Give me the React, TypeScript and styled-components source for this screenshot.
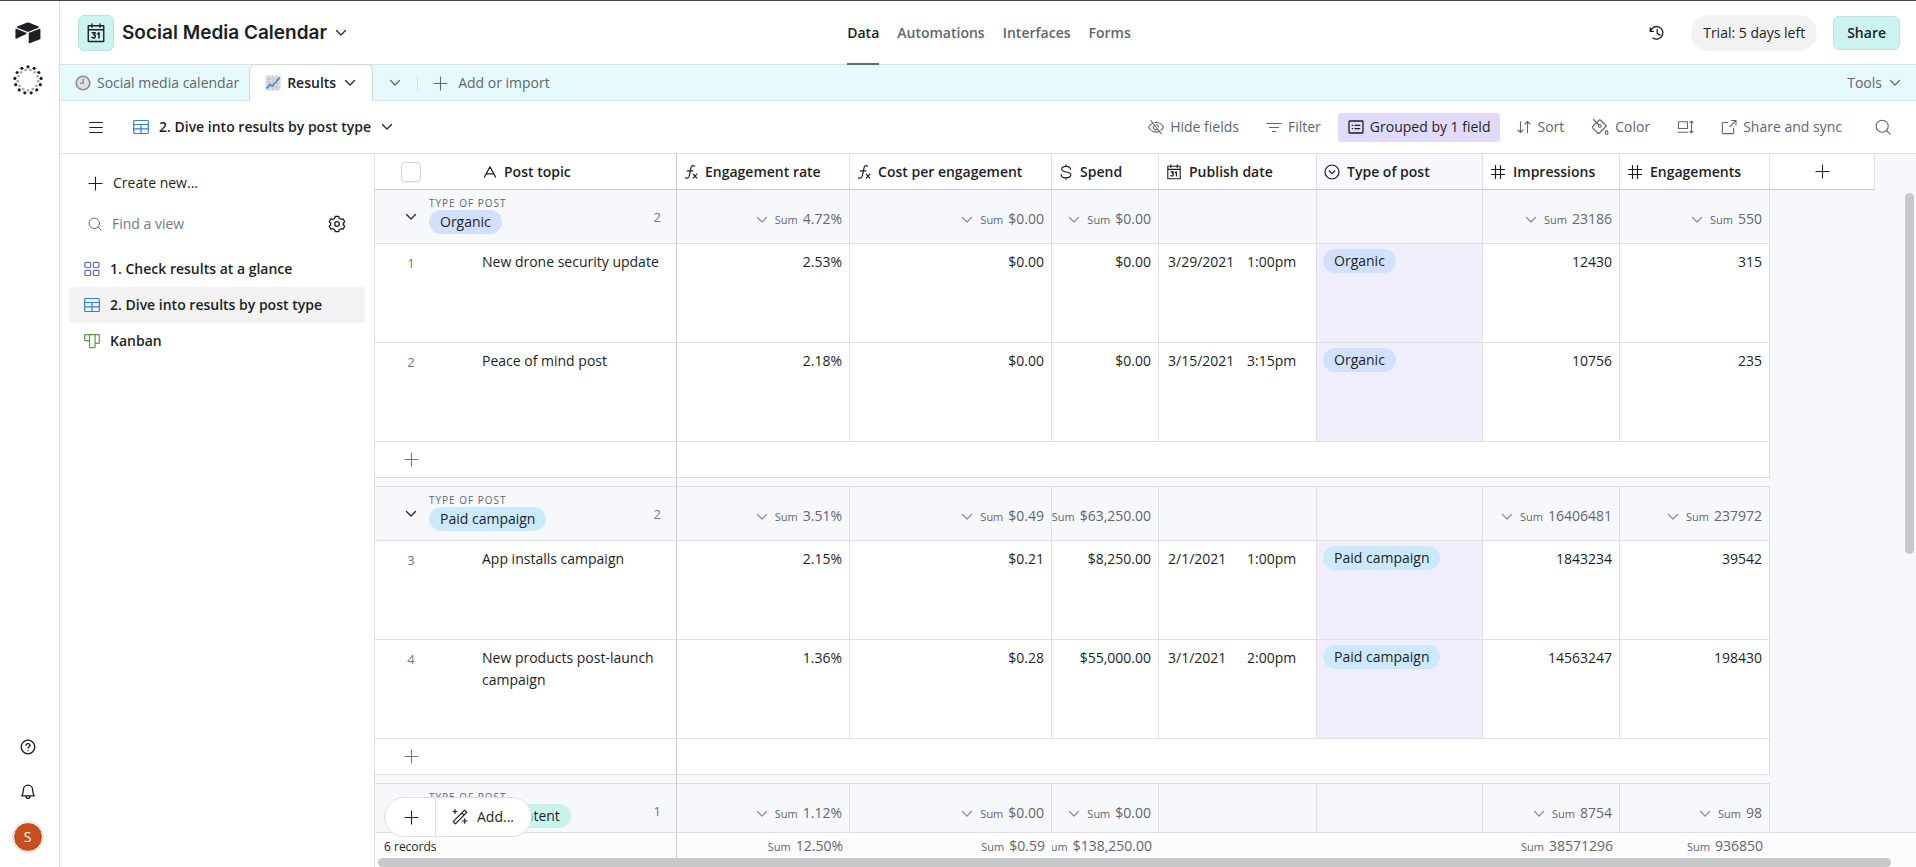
import React from 'react';
import styled, { createGlobalStyle, css } from 'styled-components';

const color = {
  text: '#1d1f25',
  muted: '#616670',
  faint: '#75797f',
  line: '#dddfe3',
  lineStrong: '#c7c9ce',
  canvas: '#f7f8fc',
  aqua: '#e6fafc',
  purple: '#e0dafb',
  purpleCell: '#f1eefc',
};

const GlobalStyle = createGlobalStyle`
  *, *::before, *::after { box-sizing: border-box; }
  body {
    margin: 0;
    background: #fff;
    color: ${color.text};
    font-family: 'Segoe UI', 'Open Sans', 'Noto Sans', sans-serif;
    font-size: 14px;
    line-height: 22px;
  }
  button, input { font: inherit; color: inherit; }
  button { margin: 0; padding: 0; border: 0; background: none; cursor: pointer; white-space: nowrap; }
  a { color: inherit; text-decoration: none; }
  svg { display: block; flex: none; }
`;

/* ---------- icons ---------- */

const Svg = styled.svg.attrs({ fill: 'none', stroke: 'currentColor', strokeLinecap: 'round', strokeLinejoin: 'round', 'aria-hidden': true })``;

type IconProps = { size?: number };

const Caret = () => (
  <Svg width="12" height="12" viewBox="0 0 12 12" strokeWidth="1.2"><path d="M1.500 3.500 6 8l4.500-4.500" /></Svg>
);
const Plus = ({ size = 15 }: IconProps) => (
  <Svg width={size} height={size} viewBox="0 0 15 15" strokeWidth="1.1"><path d="M7.500 1v13M1 7.500h13" /></Svg>
);
const Search = ({ size = 16 }: IconProps) => (
  <Svg width={size} height={size} viewBox="0 0 16 16" strokeWidth="1.1"><circle cx="7.2" cy="7.2" r="6" /><path d="m11.5 11.5 3.6 3.6" /></Svg>
);
const Calendar = ({ size = 16 }: IconProps) => (
  <Svg width={size} height={size} viewBox="0 0 16 16" strokeWidth="1.1">
    <path d="M1.800 2.200h12.400v12.600H1.800zM1.800 5.400h12.400M4.800.8v2.600M11.200.8v2.600" />
    <path strokeWidth="1.200" d="M5 7.800h2.400L6.200 9.400c1.800 0 1.600 2.600-.1 2.600-.6 0-1-.2-1.300-.6M9.200 8.600l1.200-.8V12" />
  </Svg>
);
const TableIcon = () => (
  <Svg width="16" height="16" viewBox="0 0 16 16" strokeWidth="1.2">
    <rect x=".7" y="1.500" width="14.600" height="13" rx="1" /><path d="M.7 5.500h14.600M.7 9.900h14.600M8 5.500v9" />
  </Svg>
);
const GalleryIcon = () => (
  <Svg width="16" height="16" viewBox="0 0 16 16" strokeWidth="1.2">
    <rect x=".9" y="1.300" width="5.600" height="5.200" rx="1" /><rect x="9.300" y="1.300" width="5.600" height="5.200" rx="1" />
    <rect x=".9" y="9.300" width="5.600" height="5.200" rx="1" /><rect x="9.300" y="9.300" width="5.600" height="5.200" rx="1" />
  </Svg>
);
const KanbanIcon = () => (
  <Svg width="16" height="16" viewBox="0 0 16 16" strokeWidth="1.2">
    <path d="M.7 1.600h14.600v7.800a.9.900 0 0 1-.9.900h-3.300v3.400a.9.900 0 0 1-.9.900H6.400a.9.900 0 0 1-.9-.9V7.600H1.600a.9.900 0 0 1-.9-.9zM5.500 1.600v6M11.100 1.600v8.700" />
  </Svg>
);
const Gear = () => (
  <Svg width="18" height="18" viewBox="0 0 18 18" strokeWidth="1.3">
    <circle cx="9" cy="9" r="2.3" />
    <path d="M7.300 1.300h3.400l.6 2 1.700 1 2.100-.5 1.600 2.900-1.400 1.500v1.600l1.400 1.500-1.600 2.900-2.100-.5-1.700 1-.6 2H7.300l-.6-2-1.700-1-2.100.5-1.600-2.900 1.400-1.500V8.200L1.300 6.700l1.600-2.900 2.100.5 1.700-1z" />
  </Svg>
);
const Menu = () => (
  <Svg width="14" height="14" viewBox="0 0 14 14" strokeWidth="1.2"><path d="M.7 2.500h12.600M.7 7.500h12.600M.7 12.500h12.600" /></Svg>
);
const EyeOff = () => (
  <Svg width="16" height="16" viewBox="0 0 16 16" strokeWidth="1.1">
    <path d="M2.900 1.500 13.200 14.600M5.300 4C2 5.300.6 8.200.6 8.200s2.200 4.900 7.400 4.900c1.100 0 2.100-.2 3-.6M7.200 3.400l.8-.1c5.200 0 7.400 4.900 7.400 4.900s-.8 1.700-2.400 3.100M6.300 6.300a2.600 2.600 0 0 0 3.500 3.900M8.600 5.600c1 .2 1.900 1.100 2 2.300" />
  </Svg>
);
const FilterIcon = () => (
  <Svg width="16" height="16" viewBox="0 0 16 16" strokeWidth="1.2"><path d="M.8 4.500h14.400M3.500 8.500h9M6.500 12.500h3" /></Svg>
);
const GroupIcon = () => (
  <Svg width="16" height="16" viewBox="0 0 16 16" strokeWidth="1.3">
    <rect x="1" y="2" width="14" height="12" rx=".8" /><path d="M4.300 6.400h.4M7 6.400h4.700M4.300 9.600h.4M7 9.600h4.700" />
  </Svg>
);
const SortIcon = () => (
  <Svg width="14" height="16" viewBox="0 0 14 16" strokeWidth="1.1"><path d="M3.500 2.500v11M1 11l2.500 2.500L6 11M10.500 13.500v-11M8 5l2.500-2.500L13 5" /></Svg>
);
const Bucket = () => (
  <Svg width="18" height="18" viewBox="0 0 18 18" strokeWidth="1.1">
    <path d="M2.500 1.500 8 7M1.600 8.700 8.300 2a.8.800 0 0 1 1.100 0l6 6-7 7a1.200 1.200 0 0 1-1.700 0L1.600 9.900a.9.900 0 0 1 0-1.200z" />
    <circle cx="8.800" cy="7.900" r="1.400" /><path d="M15.600 12.300s1.400 1.600 1.400 2.600a1.400 1.400 0 0 1-2.800 0c0-1 1.400-2.600 1.400-2.600z" />
  </Svg>
);
const RowHeight = () => (
  <Svg width="17" height="16" viewBox="0 0 17 16" strokeWidth="1.100">
    <path d="M1.500 2.800h9v6.700h-9zM1 13.200h10M14.500 2.200v11.600M13 3.700l1.500-1.500L16 3.700M13 12.300l1.500 1.500 1.500-1.500" />
  </Svg>
);
const ShareOut = () => (
  <Svg width="16" height="16" viewBox="0 0 16 16" strokeWidth="1.100">
    <path d="M10.500 1.500H15V6M9 7.500l5.800-5.800M6.500 3.500H2.200a.8.800 0 0 0-.8.800v9.500c0 .4.400.8.800.8h9.600c.4 0 .8-.4.800-.8V9" />
  </Svg>
);
const History = () => (
  <Svg width="16" height="16" viewBox="0 0 16 16" strokeWidth="1.300">
    <path d="M1.200 3v3.300h3.300M1.600 6A6.300 6.300 0 1 1 4 13M8.200 4.700v3.700l3 1.700" />
  </Svg>
);
const Help = () => (
  <Svg width="16" height="16" viewBox="0 0 16 16" strokeWidth="1.300">
    <circle cx="8" cy="8" r="6.800" /><path d="M6 6.300c.1-2.500 4.100-2.200 4 .1 0 1.300-2 1.400-2 2.700M8 11.400v.1" />
  </Svg>
);
const Bell = () => (
  <Svg width="16" height="18" viewBox="0 0 16 18" strokeWidth="1.300">
    <path d="M3.400 6.800a4.600 4.600 0 0 1 9.200 0c0 3.700.9 4.900 1.600 6.100H1.800c.7-1.200 1.600-2.400 1.600-6.100zM6 13.200c.1 3 3.900 3 4 0" />
  </Svg>
);
const Wand = () => (
  <Svg width="18" height="18" viewBox="0 0 18 18" strokeWidth="1.200">
    <path d="m2.200 13.600 11.400-11.400 2.200 2.200L4.400 15.800zM10.800 5l2.200 2.200M4 1.500v4M2 3.500h4M13.700 10.800v4.400M11.500 13h4.400" />
  </Svg>
);
const TextField = () => (
  <Svg width="14" height="14" viewBox="0 0 14 14" strokeWidth="1.300"><path d="M1.500 12 7 1.800 12.500 12M3.300 8.900h7.400" /></Svg>
);
const Formula = () => (
  <Svg width="14" height="16" viewBox="0 0 14 16" strokeWidth="1.200">
    <path d="M10.500 2C8.600 1 7.400 1.900 7 4L5.400 11.500c-.4 2.200-1.700 3-3.900 2.400M3.300 6.900h5.600M9.300 10.200l3.500 4M12.800 10.200l-3.500 4" />
  </Svg>
);
const Dollar = () => (
  <Svg width="14" height="16" viewBox="0 0 14 16" strokeWidth="1.200">
    <path d="M7 .8v1.400M7 13.800v1.400M11.500 5.200C11.300 3.200 9.500 2.300 7 2.300S2.700 3.300 2.700 5.200C2.700 9 11.900 7 11.900 10.800c0 2-2 3-4.900 3s-4.800-1.100-4.900-3.100" />
  </Svg>
);
const Hash = () => (
  <Svg width="16" height="16" viewBox="0 0 16 16" strokeWidth="1.200"><path d="M5.500 1.500v13M10.500 1.500v13M1.500 5.500h13M1.500 10.500h13" /></Svg>
);
const SelectIcon = () => (
  <Svg width="16" height="16" viewBox="0 0 16 16" strokeWidth="1.200"><circle cx="8" cy="8" r="7" /><path d="m5.300 7 2.700 2.700L10.700 7" /></Svg>
);
const Logo = () => (
  <svg width="26" height="22" viewBox="8 8 184 155" fill={color.text} aria-hidden="true">
    <path d="M90.039 12.368 24.079 39.66c-3.667 1.519-3.63 6.729.062 8.192l66.235 26.266a24.58 24.58 0 0 0 18.12 0l66.236-26.266c3.69-1.463 3.729-6.673.062-8.192l-65.96-27.292a24.58 24.58 0 0 0-18.795 0z" />
    <path d="M105.312 88.46v65.617c0 3.12 3.147 5.258 6.048 4.108l73.806-28.648a4.418 4.418 0 0 0 2.79-4.108V59.813c0-3.121-3.147-5.258-6.048-4.108l-73.806 28.648a4.42 4.42 0 0 0-2.79 4.108z" />
    <path d="m88.078 91.846-21.904 10.576-2.224 1.075-46.238 22.155c-2.930 1.414-6.672-.722-6.672-3.978V60.088c0-1.178.604-2.195 1.414-2.960a5.024 5.024 0 0 1 1.120-.840c1.104-.663 2.680-.840 4.020-.310L87.710 83.760c3.564 1.414 3.844 6.408.368 8.087z" />
  </svg>
);
const DotRing = () => {
  const steps = Array.from({ length: 13 }, (_, i) => (i / 13) * Math.PI * 2 - Math.PI / 2);
  return (
    <svg width="30" height="30" viewBox="0 0 30 30" aria-hidden="true">
      {steps.map((a) => (
        <circle key={a} cx={15 + 13.2 * Math.cos(a)} cy={15 + 13.2 * Math.sin(a)} r="1.600" fill={color.text} />
      ))}
      {steps.map((a) => (
        <circle key={a} cx={15 + 10.3 * Math.cos(a + 0.24)} cy={15 + 10.3 * Math.sin(a + 0.24)} r="1.400" fill="#a9abb2" />
      ))}
    </svg>
  );
};
const ClockEmoji = () => (
  <svg width="16" height="16" viewBox="0 0 16 16" fill="none" aria-hidden="true">
    <circle cx="8" cy="8" r="6.800" fill="#e3dfe1" stroke="#8e8d94" strokeWidth="1.600" />
    <path d="M8.200 3.800v4.400H5" stroke="#77757c" strokeWidth="1.100" />
  </svg>
);
const ChartEmoji = () => (
  <svg width="16" height="16" viewBox="0 0 16 16" fill="none" aria-hidden="true">
    <rect x=".5" y=".5" width="15" height="15" rx="1" fill="#dcdfe4" />
    <path d="M4 .5v15M8 .5v15M12 .5v15M.5 4h15M.5 8h15M.5 12h15" stroke="#c2c5cb" />
    <path d="M1.500 13.500 5 9.500l2.500 1.500L14.800 2.500" stroke="#3f88d6" strokeWidth="1.600" />
  </svg>
);

/* ---------- page frame ---------- */

const Page = styled.div`
  display: flex;
  height: 100vh;
  border-top: 1px solid #43434a;
  overflow: hidden;
`;
const Rail = styled.aside`
  display: flex;
  flex: none;
  flex-direction: column;
  align-items: center;
  width: 60px;
  padding: 20px 4px 15px 0;
  border-right: 1px solid ${color.line};
`;
const RailButton = styled.button<{ $push?: boolean }>`
  display: grid;
  place-items: center;
  height: 45px;
  width: 45px;
  margin-top: ${(p) => (p.$push ? 'auto' : 0)};
`;
const RailLogo = styled.a`
  height: 36px;
  padding-top: 1px;
`;
const Avatar = styled.button`
  width: 30px;
  height: 30px;
  margin-top: 8px;
  border: 1px solid #fff;
  border-radius: 50%;
  box-shadow: 0 0 0 1px #e2e2e2;
  background: #c84f20;
  color: #fff;
`;
const Main = styled.main`
  display: flex;
  flex: 1;
  flex-direction: column;
  min-width: 0;
`;

const Header = styled.header`
  display: grid;
  flex: none;
  grid-template-columns: 1fr auto 1fr;
  height: 64px;
  padding: 0 16px 0 18px;
  border-bottom: 1px solid ${color.line};
`;
const BaseTitle = styled.button`
  display: flex;
  align-items: center;
  justify-self: start;
  gap: 8px;
`;
const BaseIcon = styled.span`
  display: grid;
  place-items: center;
  width: 36px;
  height: 36px;
  border: 1px solid #b9dfe2;
  border-radius: 6px;
  background: #cdf3f1;
`;
const Title = styled.h1`
  margin: 0;
  font-family: 'Inter', sans-serif;
  font-size: 19px;
  font-weight: 600;
  line-height: 24px;
`;
const Nav = styled.nav`
  display: flex;
  gap: 18px;
`;
const NavLink = styled.a<{ $active?: boolean }>`
  display: flex;
  align-items: center;
  margin-bottom: -1px;
  border-top: 2px solid transparent;
  border-bottom: 2px solid ${(p) => (p.$active ? '#616670' : 'transparent')};
  color: ${(p) => (p.$active ? color.text : color.muted)};
  font-weight: 600;
`;
const HeaderActions = styled.div`
  display: flex;
  align-items: center;
  justify-content: flex-end;
  gap: 16px;
`;
const IconButton = styled.button`
  display: grid;
  place-items: center;
  width: 36px;
  height: 36px;
`;
const TrialPill = styled.button`
  height: 36px;
  padding: 0 12px;
  border-radius: 18px;
  background: #f2f2f2;
`;
const ShareButton = styled.button`
  height: 34px;
  padding: 0 13px;
  border: 1px solid #c3dfe0;
  border-radius: 6px;
  background: #cbf4f1;
  font-weight: 600;
`;

/* ---------- table tabs ---------- */

const TabBar = styled.div`
  display: flex;
  flex: none;
  height: 36px;
  background: ${color.aqua};
  color: ${color.muted};
  box-shadow: inset 0 -1px #cfe6e8;
`;
const Tab = styled.button<{ $active?: boolean }>`
  display: flex;
  align-items: center;
  gap: 6px;
  padding: 0 10px 0 15px;
  ${(p) =>
    p.$active &&
    css`
      margin-top: -1px;
      padding-right: 16px;
      border: 1px solid #cfd6da;
      border-bottom: 0;
      border-radius: 6px 6px 0 0;
      background: #fff;
      color: ${color.text};
      font-weight: 600;
    `}
  svg:last-child:not(:first-child) { margin-left: 2px; }
`;
const TabMenu = styled.button`
  display: grid;
  place-items: center;
  width: 44px;
`;
const TabDivider = styled.span`
  align-self: center;
  width: 1px;
  height: 14px;
  background: #cfe0e3;
`;
const TabAction = styled.button<{ $end?: boolean }>`
  display: flex;
  align-items: center;
  gap: 10px;
  padding: 0 15px;
  ${(p) => p.$end && css`margin-left: auto; gap: 7px;`}
`;

/* ---------- view toolbar ---------- */

const Toolbar = styled.div`
  display: flex;
  flex: none;
  align-items: center;
  height: 53px;
  padding: 0 15px 0 18px;
  border-bottom: 1px solid ${color.line};
`;
const ViewButton = styled.button`
  display: flex;
  align-items: center;
  gap: 10px;
  margin-left: 19px;
  font-weight: 600;
`;
const Tint = styled.span<{ $c: string }>`
  display: flex;
  color: ${(p) => p.$c};
`;
const Tools = styled.div`
  display: flex;
  align-items: center;
  gap: 7px;
  margin-left: auto;
`;
const ToolButton = styled.button<{ $on?: boolean }>`
  display: flex;
  align-items: center;
  gap: 6px;
  height: 29px;
  padding: 0 10px;
  border-radius: 3px;
  background: ${(p) => (p.$on ? color.purple : 'transparent')};
  color: ${(p) => (p.$on ? color.text : color.muted)};
  &:last-child { margin-left: 6px; }
`;

/* ---------- view sidebar ---------- */

const Workspace = styled.div`
  display: flex;
  flex: 1;
  min-height: 0;
`;
const Sidebar = styled.aside`
  flex: none;
  width: 315px;
  padding: 11px 9px;
  border-right: 1px solid ${color.line};
`;
const CreateButton = styled.button`
  display: flex;
  align-items: center;
  gap: 10px;
  height: 36px;
  padding-left: 19px;
`;
const SearchRow = styled.label`
  display: flex;
  align-items: center;
  gap: 10px;
  height: 36px;
  margin: 5px 10px 9px 19px;
  color: ${color.muted};
`;
const SearchInput = styled.input`
  flex: 1;
  min-width: 0;
  padding: 0;
  border: 0;
  outline: 0;
  background: none;
  &::placeholder { color: #75797f; opacity: 1; }
`;
const ViewList = styled.ul`
  margin: 0;
  padding: 0;
  list-style: none;
`;
const ViewLink = styled.a<{ $active?: boolean }>`
  display: flex;
  align-items: center;
  gap: 10px;
  height: 36px;
  padding-left: 15px;
  border-radius: 3px;
  background: ${(p) => (p.$active ? '#f2f2f2' : 'transparent')};
  font-weight: 600;
`;

/* ---------- grid ---------- */

const GridPane = styled.section`
  position: relative;
  display: flex;
  flex: 1;
  flex-direction: column;
  min-width: 0;
  background: ${color.canvas};
`;
const GridScroll = styled.div`
  flex: 1;
  min-height: 0;
  overflow: hidden;
`;
const Table = styled.table`
  width: 1500px;
  table-layout: fixed;
  border-collapse: separate;
  border-spacing: 0;
`;
const cellLine = css<{ $frozen?: boolean }>`
  border-right: 1px solid ${(p) => (p.$frozen ? color.lineStrong : color.line)};
`;
const HeadCell = styled.th<{ $frozen?: boolean; $grouped?: boolean }>`
  height: 36px;
  padding: 0 0 0 7px;
  ${cellLine}
  border-bottom: 1px solid ${color.lineStrong};
  background: ${(p) => (p.$grouped ? '#f8f7fd' : '#fff')};
  font-weight: 600;
  text-align: left;
`;
const HeadLabel = styled.span`
  display: flex;
  align-items: center;
  gap: 7px;
  white-space: nowrap;
`;
const HeadPrimary = styled.div`
  display: flex;
  align-items: center;
  gap: 62px;
  padding-left: 19px;
`;
const AddField = styled.button`
  display: grid;
  place-items: center;
  width: 90px;
  height: 35px;
`;
const Checkbox = styled.input.attrs({ type: 'checkbox' })`
  width: 20px;
  height: 20px;
  margin: 0;
  appearance: none;
  border: 1px solid #d3d4d7;
  border-radius: 4px;
  box-shadow: 0 1px 1px rgba(0, 0, 0, 0.06);
`;
const GroupCell = styled.td<{ $frozen?: boolean; $grouped?: boolean }>`
  height: 54px;
  padding: 0;
  ${cellLine}
  border-bottom: 1px solid ${color.line};
  background: ${(p) => (p.$grouped ? '#f5f5fb' : color.canvas)};
`;
const GroupHead = styled.div`
  display: flex;
  align-items: center;
  padding: 0 15px 0 30px;
`;
const GroupToggle = styled.button`
  margin-right: 12px;
`;
const GroupName = styled.div`
  flex: 1;
  padding-bottom: 4px;
`;
const GroupField = styled.div`
  font-size: 10px;
  line-height: 14px;
  letter-spacing: 1px;
  color: ${color.muted};
`;
const GroupCount = styled.span`
  color: ${color.faint};
  font-size: 13px;
`;
const pillColors: Record<string, string> = {
  Organic: '#d1e0fd',
  'Paid campaign': '#cceaff',
  'Influencer content': '#c9f3ef',
};
const Pill = styled.span<{ $kind: string }>`
  display: inline-block;
  padding: 0 11px;
  border-radius: 12px;
  background: ${(p) => pillColors[p.$kind]};
  line-height: 24px;
  vertical-align: top;
  white-space: nowrap;
`;
const Sum = styled.div`
  display: flex;
  align-items: baseline;
  justify-content: flex-end;
  overflow: hidden;
  padding-right: 7px;
  color: ${color.muted};
  white-space: nowrap;
  svg { align-self: center; margin-right: 7px; color: #8a8d94; }
  small { margin-right: 5px; font-size: 11px; }
`;
const GroupSum = styled(Sum)`
  padding-top: 6px;
`;
const Cell = styled.td<{ $frozen?: boolean; $grouped?: boolean; $end?: boolean; $bare?: boolean }>`
  height: 99px;
  padding: ${(p) => (p.$grouped ? '5px 6px' : '7px 7px')};
  ${cellLine}
  ${(p) => p.$bare && css`border-right: 0;`}
  border-bottom: 1px solid ${color.line};
  background: ${(p) => (p.$grouped ? color.purpleCell : '#fff')};
  text-align: ${(p) => (p.$end ? 'right' : 'left')};
  vertical-align: top;
`;
const RowNumber = styled.div`
  width: 58px;
  padding-top: 1px;
  color: ${color.faint};
  font-size: 13px;
  text-align: center;
`;
const DateTime = styled.div`
  display: grid;
  grid-template-columns: 79px auto;
  justify-content: start;
  padding-left: 2px;
  white-space: nowrap;
`;
const AddCell = styled.td<{ $frozen?: boolean }>`
  height: 36px;
  padding: 0;
  ${cellLine}
  border-bottom: 1px solid ${color.line};
  background: #fff;
`;
const AddRowButton = styled.button`
  display: grid;
  place-items: center;
  width: 72px;
  height: 35px;
  color: #75797f;
`;
const GapCell = styled.td<{ $frozen?: boolean }>`
  height: 9px;
  padding: 0;
  border-bottom: 1px solid ${color.line};
  ${(p) => p.$frozen && css`border-right: 1px solid ${color.lineStrong};`}
`;
const Footer = styled.footer`
  flex: none;
  height: 35px;
  overflow: hidden;
  border-top: 1px solid ${color.line};
  background: #fcfcfe;
`;
const FootCell = styled.td<{ $frozen?: boolean }>`
  height: 34px;
  padding: 2px 0 0;
  vertical-align: top;
  ${(p) => p.$frozen && css`border-right: 1px solid ${color.lineStrong};`}
`;
const RecordCount = styled.div`
  padding: 1px 0 0 9px;
  font-size: 12px;
`;
const Thumb = styled.div<{ $vertical?: boolean }>`
  position: absolute;
  border-radius: 5px;
  background: #c7c8ca;
  ${(p) =>
    p.$vertical
      ? css`top: 39px; right: 2px; width: 9px; height: 361px;`
      : css`left: 3px; right: 25px; bottom: 0; height: 9px;`}
`;
const AddBar = styled.div`
  position: absolute;
  left: 9px;
  bottom: 30px;
  display: flex;
  height: 40px;
  border: 1px solid #dedfe2;
  border-radius: 20px;
  background: #fff;
`;
const AddBarButton = styled.button`
  display: flex;
  align-items: center;
  gap: 8px;
  padding: 0 17px 0 15px;
  &:first-child { padding: 0 16px 0 19px; }
  & + & { border-left: 1px solid ${color.line}; }
`;

/* ---------- data ---------- */

const columnWidths = [100, 202, 173, 202, 107, 158, 166, 137, 150, 105];

const fields = [
  { name: 'Engagement rate', icon: <Formula /> },
  { name: 'Cost per engagement', icon: <Formula /> },
  { name: 'Spend', icon: <Dollar /> },
  { name: 'Publish date', icon: <Calendar /> },
  { name: 'Type of post', icon: <SelectIcon />, grouped: true },
  { name: 'Impressions', icon: <Hash /> },
  { name: 'Engagements', icon: <Hash /> },
];

type Post = { id: number; topic: string; rate: string; cost: string; spend: string; date: string; time: string; impressions: string; engagements: string };
type Group = { kind: string; count: number; sums: (string | null)[]; posts: Post[] };

const groups: Group[] = [
  {
    kind: 'Organic',
    count: 2,
    sums: ['4.72%', '$0.00', '$0.00', null, null, '23186', '550'],
    posts: [
      { id: 1, topic: 'New drone security update', rate: '2.53%', cost: '$0.00', spend: '$0.00', date: '3/29/2021', time: '1:00pm', impressions: '12430', engagements: '315' },
      { id: 2, topic: 'Peace of mind post', rate: '2.18%', cost: '$0.00', spend: '$0.00', date: '3/15/2021', time: '3:15pm', impressions: '10756', engagements: '235' },
    ],
  },
  {
    kind: 'Paid campaign',
    count: 2,
    sums: ['3.51%', '$0.49', '$63,250.00', null, null, '16406481', '237972'],
    posts: [
      { id: 3, topic: 'App installs campaign', rate: '2.15%', cost: '$0.21', spend: '$8,250.00', date: '2/1/2021', time: '1:00pm', impressions: '1843234', engagements: '39542' },
      { id: 4, topic: 'New products post-launch campaign', rate: '1.36%', cost: '$0.28', spend: '$55,000.00', date: '3/1/2021', time: '2:00pm', impressions: '14563247', engagements: '198430' },
    ],
  },
  { kind: 'Influencer content', count: 1, sums: ['1.12%', '$0.00', '$0.00', null, null, '8754', '98'], posts: [] },
];

const totals = ['12.50%', '$0.59', '$138,250.00', null, null, '38571296', '936850'];

const Columns = () => (
  <colgroup>
    {columnWidths.map((w, i) => (
      <col key={i} width={w} />
    ))}
  </colgroup>
);

const GroupRows = ({ group }: { group: Group }) => (
  <tbody>
    <tr>
      <GroupCell colSpan={2} $frozen>
        <GroupHead>
          <GroupToggle aria-label={`Collapse ${group.kind}`}><Caret /></GroupToggle>
          <GroupName>
            <GroupField>TYPE OF POST</GroupField>
            <Pill $kind={group.kind}>{group.kind}</Pill>
          </GroupName>
          <GroupCount>{group.count}</GroupCount>
        </GroupHead>
      </GroupCell>
      {group.sums.map((sum, i) => (
        <GroupCell key={i} $grouped={fields[i].grouped}>
          {sum && <GroupSum><Caret /><small>Sum</small>{sum}</GroupSum>}
        </GroupCell>
      ))}
    </tr>
    {group.posts.map((post) => (
      <tr key={post.id}>
        <Cell $bare><RowNumber>{post.id}</RowNumber></Cell>
        <Cell $frozen>{post.topic}</Cell>
        <Cell $end>{post.rate}</Cell>
        <Cell $end>{post.cost}</Cell>
        <Cell $end>{post.spend}</Cell>
        <Cell><DateTime><span>{post.date}</span><span>{post.time}</span></DateTime></Cell>
        <Cell $grouped><Pill $kind={group.kind}>{group.kind}</Pill></Cell>
        <Cell $end>{post.impressions}</Cell>
        <Cell $end>{post.engagements}</Cell>
      </tr>
    ))}
    {group.posts.length > 0 && (
      <>
        <tr>
          <AddCell colSpan={2} $frozen><AddRowButton aria-label="Add record"><Plus /></AddRowButton></AddCell>
          <AddCell colSpan={7} />
        </tr>
        <tr>
          <GapCell colSpan={2} $frozen />
          <GapCell colSpan={7} />
        </tr>
      </>
    )}
  </tbody>
);

export default function App() {
  return (
    <>
      <GlobalStyle />
      <Page>
        <Rail>
          <RailLogo href="#home" aria-label="Home"><Logo /></RailLogo>
          <RailButton aria-label="Progress"><DotRing /></RailButton>
          <RailButton $push aria-label="Help"><Help /></RailButton>
          <RailButton aria-label="Notifications"><Bell /></RailButton>
          <Avatar>S</Avatar>
        </Rail>
        <Main>
          <Header>
            <BaseTitle>
              <BaseIcon><Calendar size={20} /></BaseIcon>
              <Title>Social Media Calendar</Title>
              <Caret />
            </BaseTitle>
            <Nav>
              <NavLink href="#data" $active>Data</NavLink>
              <NavLink href="#automations">Automations</NavLink>
              <NavLink href="#interfaces">Interfaces</NavLink>
              <NavLink href="#forms">Forms</NavLink>
            </Nav>
            <HeaderActions>
              <IconButton aria-label="History"><History /></IconButton>
              <TrialPill>Trial: 5 days left</TrialPill>
              <ShareButton>Share</ShareButton>
            </HeaderActions>
          </Header>
          <TabBar>
            <Tab><ClockEmoji />Social media calendar</Tab>
            <Tab $active><ChartEmoji />Results<Caret /></Tab>
            <TabMenu aria-label="All tables"><Caret /></TabMenu>
            <TabDivider />
            <TabAction><Plus />Add or import</TabAction>
            <TabAction $end>Tools<Caret /></TabAction>
          </TabBar>
          <Toolbar>
            <IconButton aria-label="Toggle sidebar"><Menu /></IconButton>
            <ViewButton>
              <Tint $c="#3b7dd8"><TableIcon /></Tint>
              2. Dive into results by post type
              <Caret />
            </ViewButton>
            <Tools>
              <ToolButton><EyeOff />Hide fields</ToolButton>
              <ToolButton><FilterIcon />Filter</ToolButton>
              <ToolButton $on><GroupIcon />Grouped by 1 field</ToolButton>
              <ToolButton><SortIcon />Sort</ToolButton>
              <ToolButton><Bucket />Color</ToolButton>
              <ToolButton aria-label="Row height"><RowHeight /></ToolButton>
              <ToolButton><ShareOut />Share and sync</ToolButton>
              <ToolButton aria-label="Search"><Search /></ToolButton>
            </Tools>
          </Toolbar>
          <Workspace>
            <Sidebar>
              <CreateButton><Plus />Create new...</CreateButton>
              <SearchRow>
                <Search size={14} />
                <SearchInput placeholder="Find a view" aria-label="Find a view" />
                <IconButton aria-label="View settings"><Tint $c={color.text}><Gear /></Tint></IconButton>
              </SearchRow>
              <ViewList>
                <li><ViewLink href="#glance"><Tint $c="#5f6bbd"><GalleryIcon /></Tint>1. Check results at a glance</ViewLink></li>
                <li><ViewLink href="#results" $active><Tint $c="#3b7dd8"><TableIcon /></Tint>2. Dive into results by post type</ViewLink></li>
                <li><ViewLink href="#kanban"><Tint $c="#5a9a45"><KanbanIcon /></Tint>Kanban</ViewLink></li>
              </ViewList>
            </Sidebar>
            <GridPane>
              <GridScroll>
                <Table>
                  <Columns />
                  <thead>
                    <tr>
                      <HeadCell colSpan={2} $frozen>
                        <HeadPrimary>
                          <Checkbox aria-label="Select all" />
                          <HeadLabel><TextField />Post topic</HeadLabel>
                        </HeadPrimary>
                      </HeadCell>
                      {fields.map((f) => (
                        <HeadCell key={f.name} $grouped={f.grouped}><HeadLabel>{f.icon}{f.name}</HeadLabel></HeadCell>
                      ))}
                      <HeadCell><AddField aria-label="Add field"><Plus /></AddField></HeadCell>
                    </tr>
                  </thead>
                  {groups.map((g) => (
                    <GroupRows key={g.kind} group={g} />
                  ))}
                </Table>
              </GridScroll>
              <Footer>
                <Table>
                  <Columns />
                  <tbody>
                    <tr>
                      <FootCell colSpan={2} $frozen><RecordCount>6 records</RecordCount></FootCell>
                      {totals.map((t, i) => (
                        <FootCell key={i}>{t && <Sum><small>Sum</small>{t}</Sum>}</FootCell>
                      ))}
                    </tr>
                  </tbody>
                </Table>
              </Footer>
              <AddBar>
                <AddBarButton aria-label="Add record"><Plus /></AddBarButton>
                <AddBarButton><Wand />Add...</AddBarButton>
              </AddBar>
              <Thumb $vertical />
              <Thumb />
            </GridPane>
          </Workspace>
        </Main>
      </Page>
    </>
  );
}
